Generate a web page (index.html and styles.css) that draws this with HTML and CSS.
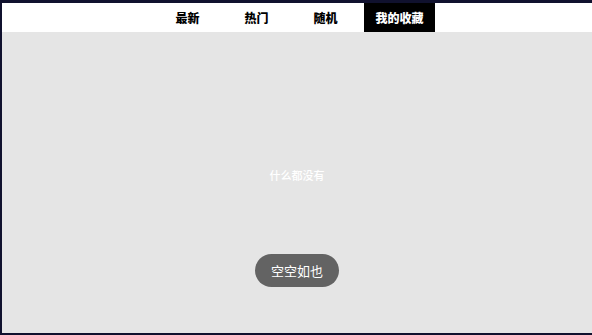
FILE: index.html
```html
<!DOCTYPE html>
<html lang="zh">
<head>
<meta charset="utf-8">
<link rel="stylesheet" href="styles.css">
</head>
<body>
<div class="frame">
  <nav class="tabs">
    <a class="tab">最新</a>
    <a class="tab">热门</a>
    <a class="tab">随机</a>
    <a class="tab active">我的收藏</a>
  </nav>
  <main class="content">
    <p class="empty">什么都没有</p>
    <div class="toast">空空如也</div>
  </main>
</div>
</body>
</html>
```
FILE: styles.css
```css
html, body {
  margin: 0;
  padding: 0;
  height: 100%;
  background: #10112e;
}
body {
  font-family: "Noto Sans CJK SC", "Noto Sans", sans-serif;
}
.frame {
  box-sizing: border-box;
  height: 335px;
  padding: 3px 0 2px 2px;
  display: flex;
  flex-direction: column;
}
.tabs {
  height: 29px;
  background: #ffffff;
  display: flex;
  justify-content: center;
  padding-right: 6px;
}
.tab {
  width: 69px;
  display: flex;
  align-items: center;
  justify-content: center;
  font-size: 12px;
  font-weight: 900;
  color: #000000;
}
.tab.active {
  width: 71px;
  margin-left: 4px;
  background: #000000;
  color: #ffffff;
}
.content {
  flex: 1;
  background: #e5e5e5;
  position: relative;
  display: flex;
  justify-content: center;
  padding-top: 134px;
  box-sizing: border-box;
}
.empty {
  margin: 0;
  color: #ffffff;
  font-size: 11px;
  font-weight: 500;
  line-height: 18px;
  height: 18px;
}
.toast {
  position: absolute;
  left: 253px;
  top: 222px;
  width: 84px;
  height: 33px;
  border-radius: 17px;
  background: #636363;
  color: #ffffff;
  font-size: 13px;
  display: flex;
  align-items: center;
  justify-content: center;
}
```
